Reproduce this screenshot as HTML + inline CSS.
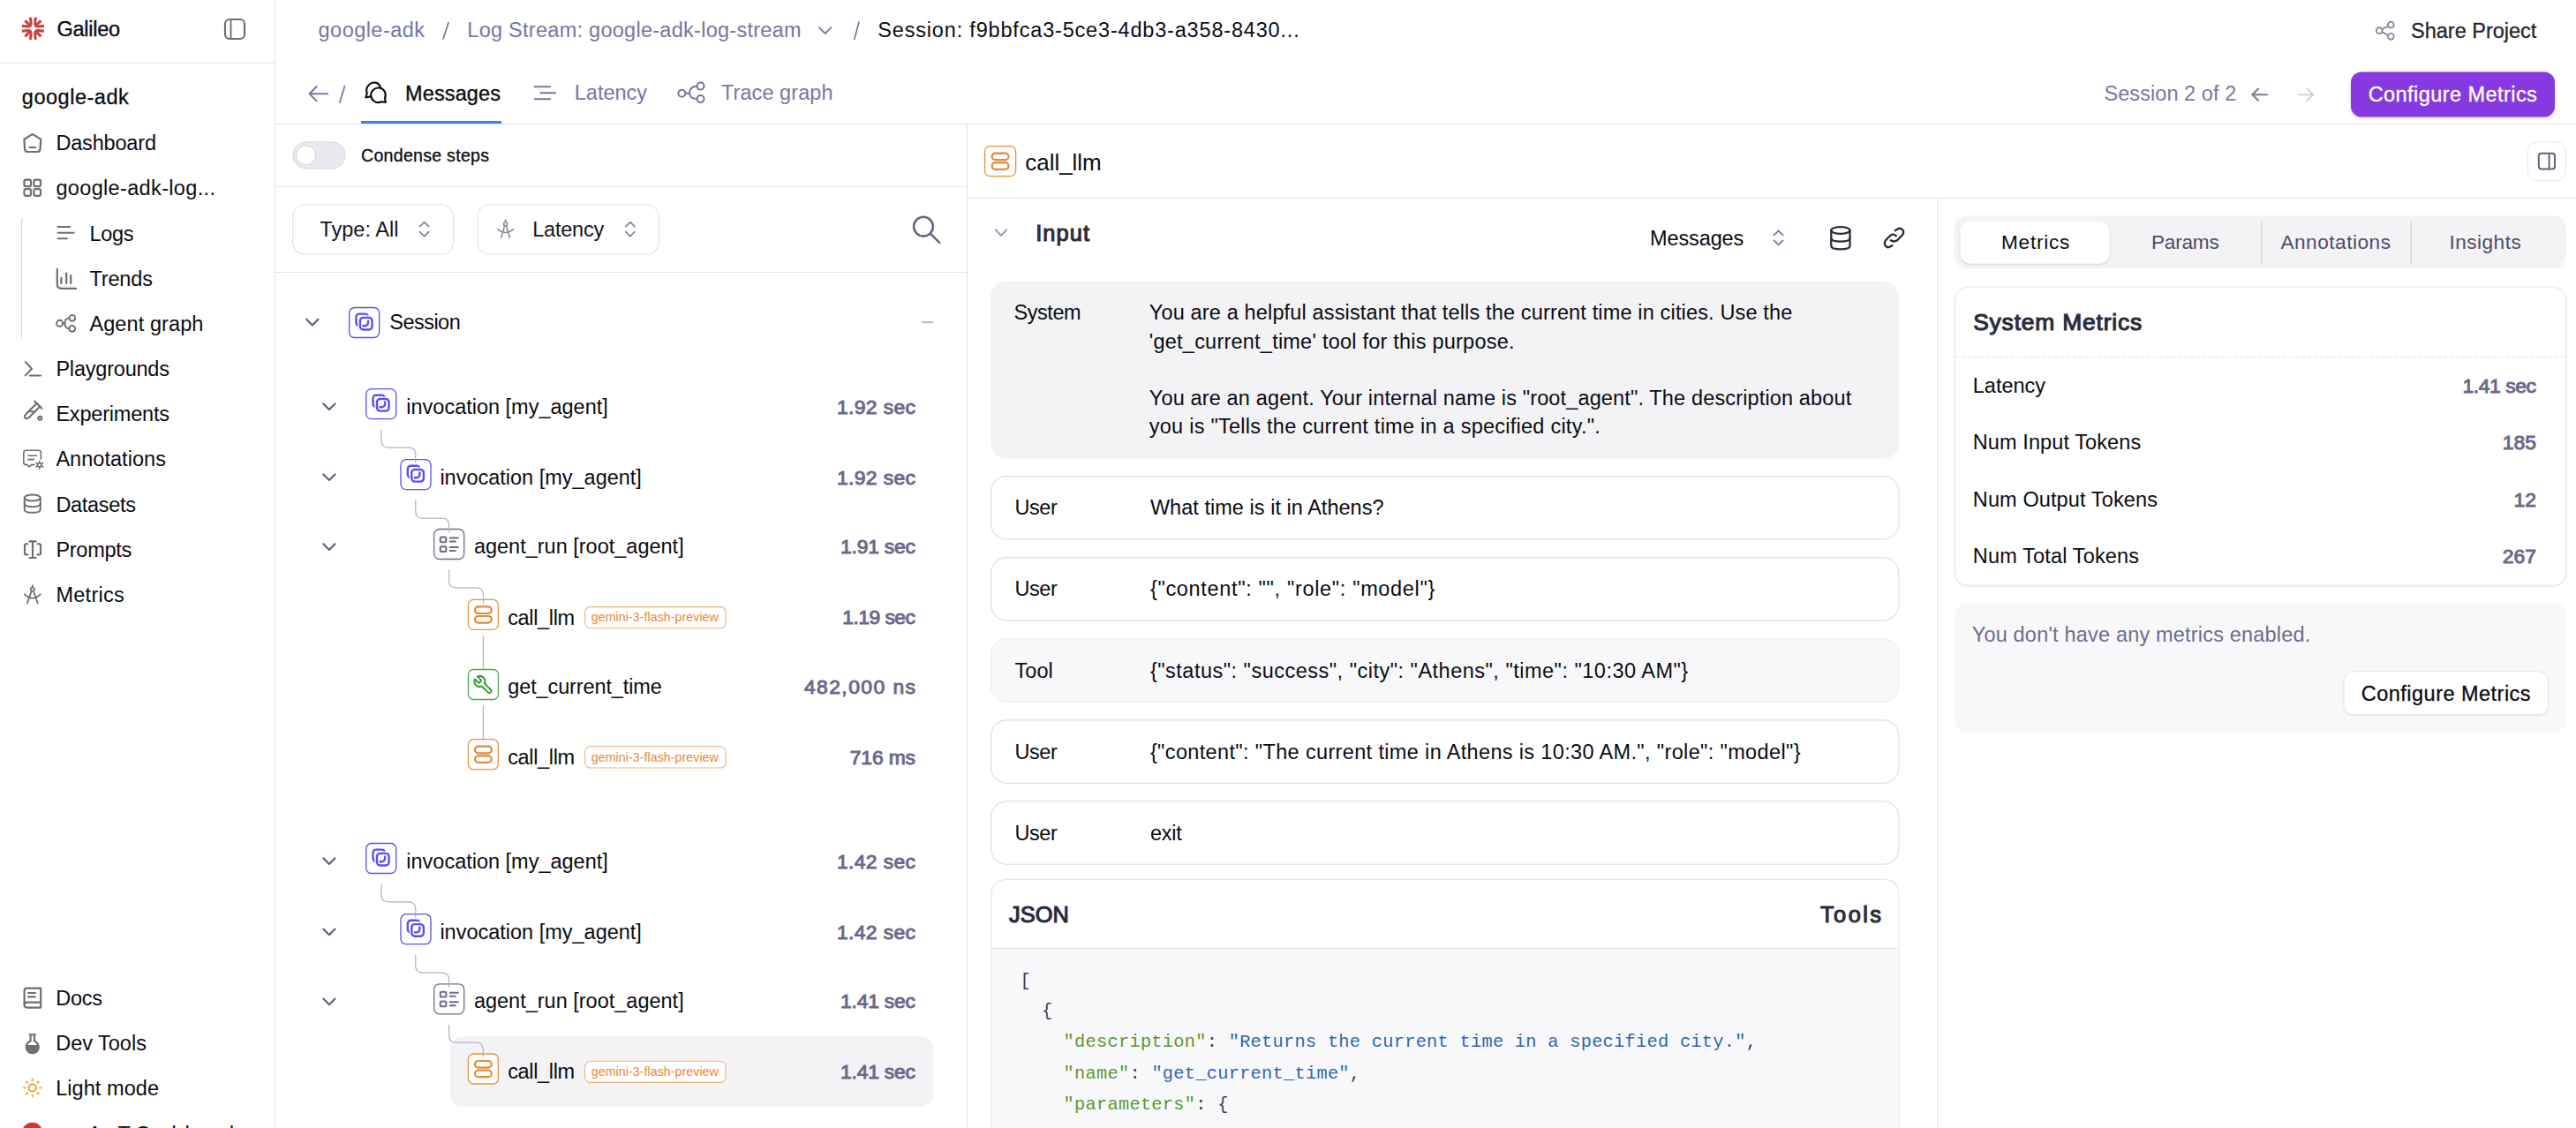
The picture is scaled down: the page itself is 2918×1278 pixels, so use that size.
<!DOCTYPE html>
<html><head><meta charset="utf-8"><style>
html,body{margin:0;padding:0;background:#fff;width:2918px;height:1278px;overflow:hidden;position:relative}
.t{position:absolute;white-space:pre;line-height:1;}
svg{position:absolute;left:0;top:0}
</style></head><body>
<svg width="2918" height="1278" viewBox="0 0 2918 1278"><line x1="311.5" y1="0" x2="311.5" y2="1278" stroke="#e2e2e6" stroke-width="1" /><line x1="0" y1="71.5" x2="311" y2="71.5" stroke="#e2e2e6" stroke-width="1" /><line x1="312" y1="140.5" x2="2918" y2="140.5" stroke="#e2e2e8" stroke-width="1" /><line x1="312" y1="211.5" x2="1095" y2="211.5" stroke="#e4e4ea" stroke-width="1" /><line x1="312" y1="308.5" x2="1095" y2="308.5" stroke="#e4e4ea" stroke-width="1" /><line x1="1095.5" y1="141" x2="1095.5" y2="1278" stroke="#e4e4ea" stroke-width="1" /><line x1="1096" y1="224.5" x2="2918" y2="224.5" stroke="#e4e4ea" stroke-width="1" /><line x1="2194.5" y1="225" x2="2194.5" y2="1278" stroke="#e4e4ea" stroke-width="1" /><g transform="translate(37.4,32.3)" fill="none" stroke="#cd4039" stroke-width="3.1" stroke-linecap="butt" stroke-linejoin="round"><g transform="rotate(0)"><path d="M-2.9 -12.6 L-2.3 -6.6 Q-1.7 -1.7 -6.6 -2.3 L-12.6 -2.9" /><path d="M-9.0 -9.0 L-3.8 -3.8"/></g><g transform="rotate(90)"><path d="M-2.9 -12.6 L-2.3 -6.6 Q-1.7 -1.7 -6.6 -2.3 L-12.6 -2.9" /><path d="M-9.0 -9.0 L-3.8 -3.8"/></g><g transform="rotate(180)"><path d="M-2.9 -12.6 L-2.3 -6.6 Q-1.7 -1.7 -6.6 -2.3 L-12.6 -2.9" /><path d="M-9.0 -9.0 L-3.8 -3.8"/></g><g transform="rotate(270)"><path d="M-2.9 -12.6 L-2.3 -6.6 Q-1.7 -1.7 -6.6 -2.3 L-12.6 -2.9" /><path d="M-9.0 -9.0 L-3.8 -3.8"/></g></g><rect x="255" y="22" width="22" height="22" rx="5" fill="none" stroke="#6f6f73" stroke-width="2.15" /><line x1="261.5" y1="22.5" x2="261.5" y2="43.5" stroke="#6f6f73" stroke-width="1.9" /><line x1="24.5" y1="247" x2="24.5" y2="382.5" stroke="#d4d4d8" stroke-width="1.2" /><g transform="translate(0,0) scale(1)" fill="none" stroke="#6f6f73" stroke-width="2.2" stroke-linecap="round" stroke-linejoin="round"><path d="M36.85 151.8 L46.2 157.9 L45.6 168.6 Q45.3 172 42 172 L31.6 172 Q28.3 172 28 168.6 L27.4 157.9 Z"/><path d="M33.6 167 H40"/></g><g transform="translate(0,0) scale(1)" fill="none" stroke="#6f6f73" stroke-width="2.2" stroke-linecap="round" stroke-linejoin="round"><rect x="27.4" y="203.6" width="7.6" height="7.6" rx="2"/><rect x="38.4" y="203.6" width="7.6" height="7.6" rx="2"/><rect x="27.4" y="214.2" width="7.6" height="7.6" rx="2"/><rect x="38.4" y="214.2" width="7.6" height="7.6" rx="2"/></g><g transform="translate(0,0) scale(1)" fill="none" stroke="#6f6f73" stroke-width="2.1" stroke-linecap="round" stroke-linejoin="round"><path d="M65.6 257 H79"/><path d="M65.6 263.7 H83.6"/><path d="M65.6 270.3 H76"/></g><g transform="translate(0,0) scale(1)" fill="none" stroke="#6f6f73" stroke-width="2.2" stroke-linecap="round" stroke-linejoin="round"><path d="M64.8 304.8 V322 Q64.8 326.8 69.6 326.8 H86.2"/><path d="M69.4 314.8 V321"/><path d="M75.2 309.6 V321"/><path d="M80.2 312 V321"/></g><g transform="translate(0,0) scale(1)" fill="none" stroke="#6f6f73" stroke-width="1.9" stroke-linecap="round" stroke-linejoin="round"><circle cx="67.6" cy="366.3" r="3.5"/><circle cx="81.8" cy="360.3" r="3.4"/><circle cx="81.8" cy="372.3" r="3.4"/><path d="M71.1 366.3 H73.4"/><path d="M78.4 360.4 Q73.4 360.4 73.4 366.3 Q73.4 372.2 78.4 372.2"/></g><g transform="translate(0,0) scale(1)" fill="none" stroke="#6f6f73" stroke-width="2" stroke-linecap="round" stroke-linejoin="round"><path d="M28.8 410 L35.9 417.7 L28.8 425.4"/><path d="M33.6 425.4 H46.1"/></g><g transform="translate(0,0) scale(1)" fill="none" stroke="#6f6f73" stroke-width="2.15" stroke-linecap="round" stroke-linejoin="round"><path d="M39.2 454.6 L47.4 462.8"/><path d="M45.2 460.6 L33.6 472.2 Q30.4 475.4 28.6 473.6 Q26.8 471.8 30 468.6 L41.6 457"/><path d="M33.2 466.2 L39.6 466.2"/><circle cx="45.3" cy="473.8" r="1.9"/></g><g transform="translate(0,0) scale(1)" fill="none" stroke="#6f6f73" stroke-width="1.6" stroke-linecap="round" stroke-linejoin="round"><path d="M46.4 520 V513 Q46.4 510.2 43.6 510.2 H29.6 Q26.8 510.2 26.8 513 V524 Q26.8 526.6 29.6 526.6 H31 L33.2 529 L35.4 526.6 H39"/><path d="M31.8 516.2 H41.6"/><path d="M31.8 520.6 H38.6"/><circle cx="44.8" cy="526.8" r="2.2"/><path d="M44.8 522.6 V524.2 M44.8 529.4 V531 M41 524.6 L42.4 525.6 M47.2 528 L48.6 529 M41 529 L42.4 528 M47.2 525.6 L48.6 524.6"/></g><g transform="translate(0,0) scale(1)" fill="none" stroke="#6f6f73" stroke-width="2" stroke-linecap="round" stroke-linejoin="round"><ellipse cx="36.75" cy="564" rx="9" ry="3.6"/><path d="M27.75 564 V577.2 Q27.75 580.8 36.75 580.8 Q45.75 580.8 45.75 577.2 V564"/><path d="M27.75 570.6 Q27.75 574.2 36.75 574.2 Q45.75 574.2 45.75 570.6"/></g><g transform="translate(0,0) scale(1)" fill="none" stroke="#6f6f73" stroke-width="2.15" stroke-linecap="round" stroke-linejoin="round"><path d="M31.2 616.2 H29.6 Q28 616.2 28 617.8 V626.8 Q28 628.4 29.6 628.4 H31.2"/><path d="M42.6 616.2 H44.4 Q46 616.2 46 617.8 V626.8 Q46 628.4 44.4 628.4 H42.6"/><path d="M33.4 613.4 H40.6 M37 613.4 V632 M33.4 632 H40.6"/></g><g transform="translate(0,0) scale(1)" fill="none" stroke="#6f6f73" stroke-width="1.7" stroke-linecap="round" stroke-linejoin="round"><circle cx="36.8" cy="667.6" r="2.1"/><path d="M36.8 663 V665.4"/><path d="M35.7 669.6 L30.8 683.6"/><path d="M37.9 669.6 L42.8 683.6"/><path d="M27.8 673.4 Q36.8 682 45.8 673.4"/></g><g transform="translate(0,0) scale(1)" fill="none" stroke="#6f6f73" stroke-width="2.15" stroke-linecap="round" stroke-linejoin="round"><path d="M46.2 1119.6 H30.4 Q27.6 1119.6 27.6 1122.4 V1138.6 Q27.6 1141.6 30.4 1141.6 H46.2 V1119.6 Z"/><path d="M27.6 1138.2 Q27.6 1135.6 30.4 1135.6 H46.2"/><path d="M32 1125 H40 M32 1129.4 H39.6"/></g><g transform="translate(0,0) scale(1)" fill="none" stroke="#6f6f73" stroke-width="2.1" stroke-linecap="round" stroke-linejoin="round"><path d="M33.4 1172.2 H40.1"/><path d="M34.6 1172.4 V1179.6 A7 7 0 1 0 38.9 1179.6 V1172.4"/></g><path d="M30.1 1184 H43.4 A7.05 7.05 0 1 1 30.1 1184 Z" fill="#6f6f73"/><g transform="translate(0,0) scale(1)" fill="none" stroke="#dbb236" stroke-width="2.15" stroke-linecap="round" stroke-linejoin="round"><circle cx="36.7" cy="1232.4" r="4.1"/><path d="M45.00 1232.50 L46.30 1232.50"/><path d="M42.57 1238.37 L43.49 1239.29"/><path d="M36.70 1240.80 L36.70 1242.10"/><path d="M30.83 1238.37 L29.91 1239.29"/><path d="M28.40 1232.50 L27.10 1232.50"/><path d="M30.83 1226.63 L29.91 1225.71"/><path d="M36.70 1224.20 L36.70 1222.90"/><path d="M42.57 1226.63 L43.49 1225.71"/></g><circle cx="36.6" cy="1283.6" r="11.8" fill="#d9342b"/><line x1="508.0" y1="25.6" x2="502.2" y2="43.9" stroke="#7776a3" stroke-width="1.7" stroke-linecap="round"/><g transform="translate(0,0) scale(1)" fill="none" stroke="#7776a3" stroke-width="1.85" stroke-linecap="round" stroke-linejoin="round"><path d="M927.9 31.2 L934.7 38.0 L941.5 31.2"/></g><line x1="973.0" y1="25.2" x2="967.8" y2="44.2" stroke="#7776a3" stroke-width="1.7" stroke-linecap="round"/><g transform="translate(0,0) scale(1)" fill="none" stroke="#8b8aa6" stroke-width="1.9" stroke-linecap="round" stroke-linejoin="round"><circle cx="2695.2" cy="34.7" r="3.4"/><circle cx="2708.3" cy="28.2" r="3.4"/><circle cx="2708.3" cy="41.3" r="3.4"/><path d="M2698.3 33.1 L2705.2 29.7 M2698.3 36.3 L2705.2 39.8"/></g><g transform="translate(0,0) scale(1)" fill="none" stroke="#7776a3" stroke-width="2" stroke-linecap="round" stroke-linejoin="round"><path d="M351 106.2 H371"/><path d="M358.6 98 L350.6 106.2 L358.6 114.4"/></g><line x1="390.5" y1="97.6" x2="384.8" y2="115.9" stroke="#7776a3" stroke-width="1.8" stroke-linecap="round"/><g transform="translate(0,0) scale(1)" fill="none" stroke="#0c0c14" stroke-width="2.1" stroke-linecap="round" stroke-linejoin="round"><path d="M432.0 115.3 A8.3 8.3 0 1 1 436.0 111.3 L436.9 115.9 Z"/><path d="M420.2 109.2 L414.4 110.4 L415.8 105.8 Q414.0 101.2 417.0 97.2 Q420.4 93.2 425.4 93.6 Q429.0 94.0 431.0 99.0"/></g><rect x="409" y="137" width="159" height="3" rx="0" fill="#3b80f6" stroke="none" stroke-width="1" /><g transform="translate(0,0) scale(1)" fill="none" stroke="#7776a3" stroke-width="2" stroke-linecap="round" stroke-linejoin="round"><path d="M605.6 98.2 H623.2"/><path d="M612.2 105.2 H629"/><path d="M605.6 112.2 H623.2"/></g><g transform="translate(0,0) scale(1)" fill="none" stroke="#7776a3" stroke-width="2.0" stroke-linecap="round" stroke-linejoin="round"><circle cx="772.4" cy="105.7" r="4"/><circle cx="793.5" cy="97.6" r="4"/><circle cx="793.5" cy="112.1" r="4"/><path d="M776.4 105.7 H781.2"/><path d="M789.5 97.8 Q781.2 97.8 781.2 105.7 Q781.2 112 789.5 112"/></g><g transform="translate(0,0) scale(1)" fill="none" stroke="#7c7b9c" stroke-width="2.15" stroke-linecap="round" stroke-linejoin="round"><path d="M2551.6 107.2 H2568"/><path d="M2558 100.6 L2551.4 107.2 L2558 113.8"/></g><g transform="translate(0,0) scale(1)" fill="none" stroke="#d3d3dc" stroke-width="2.15" stroke-linecap="round" stroke-linejoin="round"><path d="M2603.6 107.2 H2620"/><path d="M2613.6 100.6 L2620.2 107.2 L2613.6 113.8"/></g><rect x="2663" y="81.5" width="231" height="51" rx="12" fill="#8739e1" style="filter:drop-shadow(0 1px 1.5px rgba(60,30,110,0.25))"/><rect x="331.7" y="160.8" width="59.5" height="30.2" rx="15.1" fill="#e9e9ef" stroke="#d8d8e0" stroke-width="1" /><circle cx="346.5" cy="175.9" r="11" fill="#fff" stroke="#d2d2da" stroke-width="1"/><rect x="331.7" y="231.8" width="182" height="56.5" rx="14" fill="#fff" stroke="#e2e2ea" stroke-width="1.1" /><g transform="translate(0,0) scale(1)" fill="none" stroke="#8584a3" stroke-width="1.8" stroke-linecap="round" stroke-linejoin="round"><path d="M475.6 256.6 L480.7 251.6 L485.8 256.6"/><path d="M475.6 262.6 L480.7 267.6 L485.8 262.6"/></g><rect x="540.8" y="231.8" width="205.5" height="56.5" rx="14" fill="#fff" stroke="#e2e2ea" stroke-width="1.1" /><g transform="translate(0,0) scale(1)" fill="none" stroke="#8a89a4" stroke-width="1.6" stroke-linecap="round" stroke-linejoin="round"><circle cx="572.6" cy="253.8" r="2"/><path d="M572.6 249 V251.6"/><path d="M571.6 255.8 L567.8 269.4"/><path d="M573.6 255.8 L577.4 269.4"/><path d="M563.6 259.6 Q572.6 267.4 581.6 259.6"/></g><g transform="translate(0,0) scale(1)" fill="none" stroke="#8584a3" stroke-width="1.8" stroke-linecap="round" stroke-linejoin="round"><path d="M708.8 256.6 L713.9 251.6 L719 256.6"/><path d="M708.8 262.6 L713.9 267.6 L719 262.6"/></g><g transform="translate(0,0) scale(1)" fill="none" stroke="#67658a" stroke-width="2.6" stroke-linecap="round" stroke-linejoin="round"><circle cx="1046" cy="256.7" r="10.9"/><path d="M1054.4 265.1 L1064.2 274.9"/></g><rect x="510" y="1174" width="547" height="80" rx="14" fill="#f3f3f6" stroke="none" stroke-width="1" /><g transform="translate(0,0) scale(1)" fill="none" stroke="#5f5d7c" stroke-width="2.1" stroke-linecap="round" stroke-linejoin="round"><path d="M347.2 361.7 L353.8 368.4 L360.40000000000003 361.7"/></g><rect x="395.6" y="348.5" width="34" height="34" rx="6" fill="#fff" stroke="#5b4ff0" stroke-width="1.3" /><g transform="translate(0,0) scale(1)" fill="none" stroke="#5b4ff0" stroke-width="2.4" stroke-linecap="round" stroke-linejoin="round"><rect x="403.40000000000003" y="355.6" width="13.6" height="13.6" rx="3.6"/></g><rect x="407.90000000000003" y="359.90000000000003" width="13.6" height="13.6" rx="3.6" fill="none" stroke="#fff" stroke-width="5"/><g transform="translate(0,0) scale(1)" fill="none" stroke="#5b4ff0" stroke-width="2.4" stroke-linecap="round" stroke-linejoin="round"><rect x="407.90000000000003" y="359.90000000000003" width="13.6" height="13.6" rx="3.6"/></g><line x1="1044" y1="365.2" x2="1057" y2="365.2" stroke="#b3b2c8" stroke-width="1.9" /><g transform="translate(0,0) scale(1)" fill="none" stroke="#5f5d7c" stroke-width="2.1" stroke-linecap="round" stroke-linejoin="round"><path d="M366.29999999999995 457.4 L372.9 464.09999999999997 L379.5 457.4"/></g><rect x="414.7" y="440.59999999999997" width="34" height="34" rx="6" fill="#fff" stroke="#5b4ff0" stroke-width="1.3" /><g transform="translate(0,0) scale(1)" fill="none" stroke="#5b4ff0" stroke-width="2.4" stroke-linecap="round" stroke-linejoin="round"><rect x="422.5" y="447.7" width="13.6" height="13.6" rx="3.6"/></g><rect x="427.0" y="452.0" width="13.6" height="13.6" rx="3.6" fill="none" stroke="#fff" stroke-width="5"/><g transform="translate(0,0) scale(1)" fill="none" stroke="#5b4ff0" stroke-width="2.4" stroke-linecap="round" stroke-linejoin="round"><rect x="427.0" y="452.0" width="13.6" height="13.6" rx="3.6"/></g><g transform="translate(0,0) scale(1)" fill="none" stroke="#5f5d7c" stroke-width="2.1" stroke-linecap="round" stroke-linejoin="round"><path d="M366.29999999999995 537.4 L372.9 544.1 L379.5 537.4"/></g><rect x="454.0" y="520.6" width="34" height="34" rx="6" fill="#fff" stroke="#5b4ff0" stroke-width="1.3" /><g transform="translate(0,0) scale(1)" fill="none" stroke="#5b4ff0" stroke-width="2.4" stroke-linecap="round" stroke-linejoin="round"><rect x="461.8" y="527.7" width="13.6" height="13.6" rx="3.6"/></g><rect x="466.3" y="532.0" width="13.6" height="13.6" rx="3.6" fill="none" stroke="#fff" stroke-width="5"/><g transform="translate(0,0) scale(1)" fill="none" stroke="#5b4ff0" stroke-width="2.4" stroke-linecap="round" stroke-linejoin="round"><rect x="466.3" y="532.0" width="13.6" height="13.6" rx="3.6"/></g><g transform="translate(0,0) scale(1)" fill="none" stroke="#5f5d7c" stroke-width="2.1" stroke-linecap="round" stroke-linejoin="round"><path d="M366.29999999999995 616.3 L372.9 623.0 L379.5 616.3"/></g><rect x="491.7" y="599.5" width="34" height="34" rx="6" fill="#fff" stroke="#6e6c8c" stroke-width="1.3" /><g transform="translate(0,0) scale(1)" fill="none" stroke="#6b6989" stroke-width="2" stroke-linecap="round" stroke-linejoin="round"><rect x="498.8" y="608.4" width="6.6" height="5.8" rx="1.6"/><rect x="498.8" y="619.2" width="6.6" height="5.8" rx="1.6"/><path d="M509.8 609.4 H518.8 M509.8 613.4 H515.8 M509.8 620.0 H518.8 M509.8 624.0 H515.8"/></g><rect x="530.4" y="679.4" width="34" height="34" rx="6" fill="#fff" stroke="#e6923f" stroke-width="1.3" /><g transform="translate(0,0) scale(1)" fill="none" stroke="#e08b38" stroke-width="2.2" stroke-linecap="round" stroke-linejoin="round"><rect x="538.0" y="687.4" width="18.8" height="7.6" rx="3.8"/><rect x="538.0" y="698.0" width="18.8" height="7.6" rx="3.8"/></g><rect x="662.7" y="687.6" width="159.4" height="24.2" rx="6" fill="#fff" stroke="#f2b27a" stroke-width="1.1" /><line x1="547.4" y1="720" x2="547.4" y2="758" stroke="#b3b2c6" stroke-width="1.3" /><rect x="530.5" y="758.5" width="34" height="34" rx="6" fill="#fff" stroke="#4caa48" stroke-width="1.3" /><g transform="translate(535.4,764.0) scale(1.0)" fill="none" stroke="#3e9d3a" stroke-width="2.1" stroke-linecap="round" stroke-linejoin="round"><path transform="translate(24,0) scale(-1,1)" d="M14.7 6.3a1 1 0 0 0 0 1.4l1.6 1.6a1 1 0 0 0 1.4 0l3.77-3.77a6 6 0 0 1-7.94 7.94l-6.91 6.91a2.12 2.12 0 0 1-3-3l6.91-6.91a6 6 0 0 1 7.94-7.94l-3.76 3.76z"/></g><line x1="547.4" y1="799" x2="547.4" y2="837" stroke="#b3b2c6" stroke-width="1.3" /><rect x="530.4" y="837.7" width="34" height="34" rx="6" fill="#fff" stroke="#e6923f" stroke-width="1.3" /><g transform="translate(0,0) scale(1)" fill="none" stroke="#e08b38" stroke-width="2.2" stroke-linecap="round" stroke-linejoin="round"><rect x="538.0" y="845.7" width="18.8" height="7.6" rx="3.8"/><rect x="538.0" y="856.3000000000001" width="18.8" height="7.6" rx="3.8"/></g><rect x="662.7" y="845.8" width="159.4" height="24.2" rx="6" fill="#fff" stroke="#f2b27a" stroke-width="1.1" /><g transform="translate(0,0) scale(1)" fill="none" stroke="#5f5d7c" stroke-width="2.1" stroke-linecap="round" stroke-linejoin="round"><path d="M366.29999999999995 972.3 L372.9 979.0 L379.5 972.3"/></g><rect x="414.7" y="955.5" width="34" height="34" rx="6" fill="#fff" stroke="#5b4ff0" stroke-width="1.3" /><g transform="translate(0,0) scale(1)" fill="none" stroke="#5b4ff0" stroke-width="2.4" stroke-linecap="round" stroke-linejoin="round"><rect x="422.5" y="962.6" width="13.6" height="13.6" rx="3.6"/></g><rect x="427.0" y="966.9" width="13.6" height="13.6" rx="3.6" fill="none" stroke="#fff" stroke-width="5"/><g transform="translate(0,0) scale(1)" fill="none" stroke="#5b4ff0" stroke-width="2.4" stroke-linecap="round" stroke-linejoin="round"><rect x="427.0" y="966.9" width="13.6" height="13.6" rx="3.6"/></g><g transform="translate(0,0) scale(1)" fill="none" stroke="#5f5d7c" stroke-width="2.1" stroke-linecap="round" stroke-linejoin="round"><path d="M366.29999999999995 1052.5 L372.9 1059.2 L379.5 1052.5"/></g><rect x="454.0" y="1035.7" width="34" height="34" rx="6" fill="#fff" stroke="#5b4ff0" stroke-width="1.3" /><g transform="translate(0,0) scale(1)" fill="none" stroke="#5b4ff0" stroke-width="2.4" stroke-linecap="round" stroke-linejoin="round"><rect x="461.8" y="1042.8" width="13.6" height="13.6" rx="3.6"/></g><rect x="466.3" y="1047.1" width="13.6" height="13.6" rx="3.6" fill="none" stroke="#fff" stroke-width="5"/><g transform="translate(0,0) scale(1)" fill="none" stroke="#5b4ff0" stroke-width="2.4" stroke-linecap="round" stroke-linejoin="round"><rect x="466.3" y="1047.1" width="13.6" height="13.6" rx="3.6"/></g><g transform="translate(0,0) scale(1)" fill="none" stroke="#5f5d7c" stroke-width="2.1" stroke-linecap="round" stroke-linejoin="round"><path d="M366.29999999999995 1131.6 L372.9 1138.3 L379.5 1131.6"/></g><rect x="491.7" y="1114.8" width="34" height="34" rx="6" fill="#fff" stroke="#6e6c8c" stroke-width="1.3" /><g transform="translate(0,0) scale(1)" fill="none" stroke="#6b6989" stroke-width="2" stroke-linecap="round" stroke-linejoin="round"><rect x="498.8" y="1123.7" width="6.6" height="5.8" rx="1.6"/><rect x="498.8" y="1134.5" width="6.6" height="5.8" rx="1.6"/><path d="M509.8 1124.7 H518.8 M509.8 1128.7 H515.8 M509.8 1135.3 H518.8 M509.8 1139.3 H515.8"/></g><rect x="530.4" y="1194.0" width="34" height="34" rx="6" fill="#fff" stroke="#e6923f" stroke-width="1.3" /><g transform="translate(0,0) scale(1)" fill="none" stroke="#e08b38" stroke-width="2.2" stroke-linecap="round" stroke-linejoin="round"><rect x="538.0" y="1202.0" width="18.8" height="7.6" rx="3.8"/><rect x="538.0" y="1212.6" width="18.8" height="7.6" rx="3.8"/></g><rect x="662.7" y="1202.2" width="159.4" height="24.2" rx="6" fill="#fff" stroke="#f2b27a" stroke-width="1.1" /><path d="M432 486.7 V499.0 Q432 507.0 440 507.0 H462.75 Q470.75 507.0 470.75 515.0 V524.6" fill="none" stroke="#b3b2c6" stroke-width="1.25"/><path d="M470.75 566.6999999999999 V578.9999999999999 Q470.75 586.9999999999999 478.75 586.9999999999999 H500.6 Q508.6 586.9999999999999 508.6 594.9999999999999 V603.5" fill="none" stroke="#b3b2c6" stroke-width="1.25"/><path d="M508.6 645.5999999999999 V657.8999999999999 Q508.6 665.8999999999999 516.6 665.8999999999999 H539.4 Q547.4 665.8999999999999 547.4 673.8999999999999 V683.4" fill="none" stroke="#b3b2c6" stroke-width="1.25"/><path d="M432 1001.5999999999999 V1013.8999999999999 Q432 1021.8999999999999 440 1021.8999999999999 H462.75 Q470.75 1021.8999999999999 470.75 1029.8999999999999 V1039.7" fill="none" stroke="#b3b2c6" stroke-width="1.25"/><path d="M470.75 1081.8 V1094.1 Q470.75 1102.1 478.75 1102.1 H500.6 Q508.6 1102.1 508.6 1110.1 V1118.8" fill="none" stroke="#b3b2c6" stroke-width="1.25"/><path d="M508.6 1160.8999999999999 V1173.1999999999998 Q508.6 1181.1999999999998 516.6 1181.1999999999998 H539.4 Q547.4 1181.1999999999998 547.4 1189.1999999999998 V1198.0" fill="none" stroke="#b3b2c6" stroke-width="1.25"/><rect x="1115.6" y="165.6" width="35" height="34" rx="6" fill="#fff" stroke="#e6923f" stroke-width="1.3" /><g transform="translate(0,0) scale(1)" fill="none" stroke="#e08b38" stroke-width="2.2" stroke-linecap="round" stroke-linejoin="round"><rect x="1123.6999999999998" y="173.6" width="18.8" height="7.6" rx="3.8"/><rect x="1123.6999999999998" y="184.2" width="18.8" height="7.6" rx="3.8"/></g><rect x="2863.2" y="160.9" width="43.6" height="43.6" rx="11" fill="#fff" stroke="#e6e6ee" stroke-width="1" /><g transform="translate(0,0) scale(1)" fill="none" stroke="#64627f" stroke-width="2" stroke-linecap="round" stroke-linejoin="round"><rect x="2875.8" y="173.8" width="18.2" height="17.6" rx="3"/><path d="M2887.6 174 V191.2"/></g><g transform="translate(0,0) scale(1)" fill="none" stroke="#8f8eab" stroke-width="1.8" stroke-linecap="round" stroke-linejoin="round"><path d="M1127.8 260.4 L1134 266.8 L1140.2 260.4"/></g><g transform="translate(0,0) scale(1)" fill="none" stroke="#7776a0" stroke-width="1.8" stroke-linecap="round" stroke-linejoin="round"><path d="M2009.6 266.4 L2014.6 261.4 L2019.6 266.4"/><path d="M2009.6 272.4 L2014.6 277.4 L2019.6 272.4"/></g><g transform="translate(0,0) scale(1)" fill="none" stroke="#2c2b3d" stroke-width="2.3" stroke-linecap="round" stroke-linejoin="round"><ellipse cx="2084.9" cy="261" rx="10.6" ry="3.9"/><path d="M2074.3 261 V278.6 Q2074.3 282.4 2084.9 282.4 Q2095.5 282.4 2095.5 278.6 V261"/><path d="M2074.3 269.8 Q2074.3 273.6 2084.9 273.6 Q2095.5 273.6 2095.5 269.8"/></g><g transform="translate(0,0) scale(1)" fill="none" stroke="#2c2b3d" stroke-width="2.3" stroke-linecap="round" stroke-linejoin="round"><path d="M2146.7 261.2 L2149.6 259.4 Q2153.4 257.6 2155.6 260.8 Q2157.2 263.8 2154.6 266.6 L2149.4 272 Q2145.6 275 2141.8 272.2"/><path d="M2147.9 267.4 Q2144.8 264.2 2141.6 266.6 L2136.4 271.8 Q2133.8 275 2135.4 278 Q2137.8 281.4 2141 279.6 L2143.4 278.2"/></g><rect x="1122" y="318.7" width="1029.5" height="201" rx="18" fill="#f3f3f6" stroke="none" stroke-width="1" /><rect x="1122.5" y="539.5" width="1028.5" height="71.5" rx="18" fill="#fff" stroke="#dcdce5" stroke-width="1.1" /><rect x="1122.5" y="631.6" width="1028.5" height="71.5" rx="18" fill="#fff" stroke="#dcdce5" stroke-width="1.1" /><rect x="1122.5" y="723.9" width="1028.5" height="71.5" rx="18" fill="#f8f8fa" stroke="#ececf1" stroke-width="1" /><rect x="1122.5" y="815.9" width="1028.5" height="71.5" rx="18" fill="#fff" stroke="#dcdce5" stroke-width="1.1" /><rect x="1122.5" y="907.8" width="1028.5" height="71.5" rx="18" fill="#fff" stroke="#dcdce5" stroke-width="1.1" /><path d="M1123 1278 V1014.4 Q1123 996.4 1141 996.4 H2133 Q2151 996.4 2151 1014.4 V1278" fill="#fff" stroke="#e6e6ec" stroke-width="1.1"/><rect x="1123.6" y="1075" width="1026.8" height="210" rx="0" fill="#f8f8fb" stroke="none" stroke-width="1" /><line x1="1123.5" y1="1074.5" x2="2150.5" y2="1074.5" stroke="#dedee6" stroke-width="1.2" /><rect x="2214" y="244.2" width="692.8" height="60.1" rx="14" fill="#f3f3f6" stroke="none" stroke-width="1" /><rect x="2220.5" y="250.4" width="169.3" height="48.4" rx="12" fill="#fff" style="filter:drop-shadow(0 1px 1.2px rgba(30,30,60,0.18))"/><line x1="2561.6" y1="251" x2="2561.6" y2="298.4" stroke="#cfcfda" stroke-width="1.2" /><line x1="2731.1" y1="251" x2="2731.1" y2="298.4" stroke="#cfcfda" stroke-width="1.2" /><rect x="2214.5" y="325.4" width="692" height="337.8" rx="14" fill="#fff" stroke="#e7e7ee" stroke-width="1" style="filter:drop-shadow(0 1.5px 1px rgba(30,30,60,0.10))"/><line x1="2215" y1="404.5" x2="2906" y2="404.5" stroke="#e2e2ea" stroke-width="1" stroke-dasharray="4 3"/><rect x="2214" y="683.2" width="692.8" height="146.7" rx="14" fill="#f8f8fa" stroke="none" stroke-width="1" /><rect x="2655" y="760.8" width="231.3" height="48.8" rx="11" fill="#fff" stroke="#e4e4ec" stroke-width="1" style="filter:drop-shadow(0 1px 1px rgba(30,30,60,0.08))"/></svg>
<div class="t" id="t0" style="top:22.13px;font-family:'Liberation Sans', sans-serif;font-size:23.5px;color:#0c0c14;font-weight:400;letter-spacing:-0.276px;-webkit-text-stroke:0.35px #0c0c14;left:64.50px;">Galileo</div>
<div class="t" id="t1" style="top:99.43px;font-family:'Liberation Sans', sans-serif;font-size:23.5px;color:#0c0c14;font-weight:400;letter-spacing:0.523px;-webkit-text-stroke:0.3px #0c0c14;left:24.80px;">google-adk</div>
<div class="t" id="t2" style="top:151.03px;font-family:'Liberation Sans', sans-serif;font-size:23.5px;color:#0c0c14;font-weight:400;letter-spacing:-0.171px;left:63.40px;">Dashboard</div>
<div class="t" id="t3" style="top:201.62px;font-family:'Liberation Sans', sans-serif;font-size:23.5px;color:#0c0c14;font-weight:400;letter-spacing:0.346px;left:63.40px;">google-adk-log...</div>
<div class="t" id="t4" style="top:254.03px;font-family:'Liberation Sans', sans-serif;font-size:23.5px;color:#0c0c14;font-weight:400;letter-spacing:-0.323px;left:101.40px;">Logs</div>
<div class="t" id="t5" style="top:304.72px;font-family:'Liberation Sans', sans-serif;font-size:23.5px;color:#0c0c14;font-weight:400;letter-spacing:-0.156px;left:101.40px;">Trends</div>
<div class="t" id="t6" style="top:356.02px;font-family:'Liberation Sans', sans-serif;font-size:23.5px;color:#0c0c14;font-weight:400;letter-spacing:0.095px;left:101.40px;">Agent graph</div>
<div class="t" id="t7" style="top:407.32px;font-family:'Liberation Sans', sans-serif;font-size:23.5px;color:#0c0c14;font-weight:400;letter-spacing:-0.204px;left:63.40px;">Playgrounds</div>
<div class="t" id="t8" style="top:458.42px;font-family:'Liberation Sans', sans-serif;font-size:23.5px;color:#0c0c14;font-weight:400;letter-spacing:-0.201px;left:63.40px;">Experiments</div>
<div class="t" id="t9" style="top:508.52px;font-family:'Liberation Sans', sans-serif;font-size:23.5px;color:#0c0c14;font-weight:400;letter-spacing:0.037px;left:63.40px;">Annotations</div>
<div class="t" id="t10" style="top:560.73px;font-family:'Liberation Sans', sans-serif;font-size:23.5px;color:#0c0c14;font-weight:400;letter-spacing:-0.307px;left:63.40px;">Datasets</div>
<div class="t" id="t11" style="top:612.02px;font-family:'Liberation Sans', sans-serif;font-size:23.5px;color:#0c0c14;font-weight:400;letter-spacing:-0.267px;left:63.40px;">Prompts</div>
<div class="t" id="t12" style="top:663.02px;font-family:'Liberation Sans', sans-serif;font-size:23.5px;color:#0c0c14;font-weight:400;letter-spacing:0.278px;left:63.40px;">Metrics</div>
<div class="t" id="t13" style="top:1119.83px;font-family:'Liberation Sans', sans-serif;font-size:23.5px;color:#0c0c14;font-weight:400;letter-spacing:-0.282px;left:63.20px;">Docs</div>
<div class="t" id="t14" style="top:1170.73px;font-family:'Liberation Sans', sans-serif;font-size:23.5px;color:#0c0c14;font-weight:400;letter-spacing:-0.008px;left:63.20px;">Dev Tools</div>
<div class="t" id="t15" style="top:1222.43px;font-family:'Liberation Sans', sans-serif;font-size:23.5px;color:#0c0c14;font-weight:400;letter-spacing:0.058px;left:63.20px;">Light mode</div>
<div class="t" id="t16" style="top:1273.83px;font-family:'Liberation Sans', sans-serif;font-size:23.5px;color:#0c0c14;font-weight:400;left:99.50px;">A</div>
<div class="t" id="t17" style="top:1273.83px;font-family:'Liberation Sans', sans-serif;font-size:23.5px;color:#0c0c14;font-weight:400;left:133.50px;">T</div>
<div class="t" id="t18" style="top:1273.83px;font-family:'Liberation Sans', sans-serif;font-size:23.5px;color:#0c0c14;font-weight:400;left:153.00px;">O</div>
<div class="t" id="t19" style="top:1273.83px;font-family:'Liberation Sans', sans-serif;font-size:23.5px;color:#0c0c14;font-weight:400;left:194.50px;">l</div>
<div class="t" id="t20" style="top:1273.83px;font-family:'Liberation Sans', sans-serif;font-size:23.5px;color:#0c0c14;font-weight:400;left:209.50px;">l</div>
<div class="t" id="t21" style="top:1273.83px;font-family:'Liberation Sans', sans-serif;font-size:23.5px;color:#0c0c14;font-weight:400;left:252.00px;">d</div>
<div class="t" id="t22" style="top:23.03px;font-family:'Liberation Sans', sans-serif;font-size:23.5px;color:#7776a3;font-weight:400;letter-spacing:0.456px;left:360.60px;">google-adk</div>
<div class="t" id="t23" style="top:23.03px;font-family:'Liberation Sans', sans-serif;font-size:23.5px;color:#7776a3;font-weight:400;letter-spacing:0.270px;left:529.30px;">Log Stream: google-adk-log-stream</div>
<div class="t" id="t24" style="top:23.03px;font-family:'Liberation Sans', sans-serif;font-size:23.5px;color:#0c0c14;font-weight:400;letter-spacing:0.818px;left:994.30px;">Session: f9bbfca3-5ce3-4db3-a358-8430...</div>
<div class="t" id="t25" style="top:23.73px;font-family:'Liberation Sans', sans-serif;font-size:23.5px;color:#25252f;font-weight:400;letter-spacing:0.001px;-webkit-text-stroke:0.3px #25252f;left:2731.00px;">Share Project</div>
<div class="t" id="t26" style="top:94.53px;font-family:'Liberation Sans', sans-serif;font-size:23.5px;color:#0c0c14;font-weight:400;letter-spacing:0.127px;-webkit-text-stroke:0.35px #0c0c14;left:459.00px;">Messages</div>
<div class="t" id="t27" style="top:94.03px;font-family:'Liberation Sans', sans-serif;font-size:23.5px;color:#7776a3;font-weight:400;letter-spacing:-0.019px;left:650.80px;">Latency</div>
<div class="t" id="t28" style="top:94.03px;font-family:'Liberation Sans', sans-serif;font-size:23.5px;color:#7776a3;font-weight:400;letter-spacing:0.066px;left:817.00px;">Trace graph</div>
<div class="t" id="t29" style="top:95.03px;font-family:'Liberation Sans', sans-serif;font-size:23.5px;color:#7776a3;font-weight:400;letter-spacing:0.059px;left:2383.50px;">Session 2 of 2</div>
<div class="t" id="t30" style="top:95.73px;font-family:'Liberation Sans', sans-serif;font-size:23.5px;color:#ffffff;font-weight:400;letter-spacing:0.440px;-webkit-text-stroke:0.3px #ffffff;left:2682.70px;">Configure Metrics</div>
<div class="t" id="t31" style="top:167.14px;font-family:'Liberation Sans', sans-serif;font-size:19.6px;color:#0c0c14;font-weight:400;letter-spacing:0.261px;-webkit-text-stroke:0.3px #0c0c14;left:409.00px;">Condense steps</div>
<div class="t" id="t32" style="top:248.72px;font-family:'Liberation Sans', sans-serif;font-size:23.5px;color:#16161e;font-weight:400;letter-spacing:0.046px;left:362.30px;">Type: All</div>
<div class="t" id="t33" style="top:248.53px;font-family:'Liberation Sans', sans-serif;font-size:23.5px;color:#16161e;font-weight:400;letter-spacing:-0.202px;left:603.20px;">Latency</div>
<div class="t" id="t34" style="top:354.02px;font-family:'Liberation Sans', sans-serif;font-size:23.5px;color:#0c0c14;font-weight:400;letter-spacing:-0.518px;left:441.25px;">Session</div>
<div class="t" id="t35" style="top:449.82px;font-family:'Liberation Sans', sans-serif;font-size:23.5px;color:#0c0c14;font-weight:400;letter-spacing:-0.005px;left:460.30px;">invocation [my_agent]</div>
<div class="t" id="t36" style="top:449.94px;font-family:'Liberation Sans', sans-serif;font-size:22.9px;color:#6b6889;font-weight:400;letter-spacing:0.365px;-webkit-text-stroke:0.96px #6b6889;right:1880.64px;">1.92 sec</div>
<div class="t" id="t37" style="top:529.82px;font-family:'Liberation Sans', sans-serif;font-size:23.5px;color:#0c0c14;font-weight:400;letter-spacing:-0.005px;left:498.40px;">invocation [my_agent]</div>
<div class="t" id="t38" style="top:529.73px;font-family:'Liberation Sans', sans-serif;font-size:22.9px;color:#6b6889;font-weight:400;letter-spacing:0.365px;-webkit-text-stroke:0.96px #6b6889;right:1880.64px;">1.92 sec</div>
<div class="t" id="t39" style="top:607.92px;font-family:'Liberation Sans', sans-serif;font-size:23.5px;color:#0c0c14;font-weight:400;letter-spacing:-0.001px;left:536.90px;">agent_run [root_agent]</div>
<div class="t" id="t40" style="top:608.03px;font-family:'Liberation Sans', sans-serif;font-size:22.9px;color:#6b6889;font-weight:400;letter-spacing:-0.221px;-webkit-text-stroke:0.96px #6b6889;right:1881.22px;">1.91 sec</div>
<div class="t" id="t41" style="top:688.52px;font-family:'Liberation Sans', sans-serif;font-size:23.5px;color:#0c0c14;font-weight:400;letter-spacing:-0.337px;left:575.20px;">call_llm</div>
<div class="t" id="t42" style="top:692.33px;font-family:'Liberation Sans', sans-serif;font-size:14.2px;color:#e8873a;font-weight:400;letter-spacing:0.061px;left:669.80px;">gemini-3-flash-preview</div>
<div class="t" id="t43" style="top:688.43px;font-family:'Liberation Sans', sans-serif;font-size:22.9px;color:#6b6889;font-weight:400;letter-spacing:-0.535px;-webkit-text-stroke:0.96px #6b6889;right:1881.54px;">1.19 sec</div>
<div class="t" id="t44" style="top:767.23px;font-family:'Liberation Sans', sans-serif;font-size:23.5px;color:#0c0c14;font-weight:400;letter-spacing:-0.123px;left:575.30px;">get_current_time</div>
<div class="t" id="t45" style="top:767.33px;font-family:'Liberation Sans', sans-serif;font-size:22.9px;color:#6b6889;font-weight:400;letter-spacing:1.424px;-webkit-text-stroke:0.96px #6b6889;right:1879.58px;">482,000 ns</div>
<div class="t" id="t46" style="top:847.02px;font-family:'Liberation Sans', sans-serif;font-size:23.5px;color:#0c0c14;font-weight:400;letter-spacing:-0.337px;left:575.20px;">call_llm</div>
<div class="t" id="t47" style="top:850.53px;font-family:'Liberation Sans', sans-serif;font-size:14.2px;color:#e8873a;font-weight:400;letter-spacing:0.061px;left:669.80px;">gemini-3-flash-preview</div>
<div class="t" id="t48" style="top:846.93px;font-family:'Liberation Sans', sans-serif;font-size:22.9px;color:#6b6889;font-weight:400;letter-spacing:-0.176px;-webkit-text-stroke:0.96px #6b6889;right:1881.18px;">716 ms</div>
<div class="t" id="t49" style="top:964.72px;font-family:'Liberation Sans', sans-serif;font-size:23.5px;color:#0c0c14;font-weight:400;letter-spacing:-0.005px;left:460.30px;">invocation [my_agent]</div>
<div class="t" id="t50" style="top:964.83px;font-family:'Liberation Sans', sans-serif;font-size:22.9px;color:#6b6889;font-weight:400;letter-spacing:0.365px;-webkit-text-stroke:0.96px #6b6889;right:1880.64px;">1.42 sec</div>
<div class="t" id="t51" style="top:1044.93px;font-family:'Liberation Sans', sans-serif;font-size:23.5px;color:#0c0c14;font-weight:400;letter-spacing:-0.005px;left:498.40px;">invocation [my_agent]</div>
<div class="t" id="t52" style="top:1044.84px;font-family:'Liberation Sans', sans-serif;font-size:22.9px;color:#6b6889;font-weight:400;letter-spacing:0.365px;-webkit-text-stroke:0.96px #6b6889;right:1880.64px;">1.42 sec</div>
<div class="t" id="t53" style="top:1123.22px;font-family:'Liberation Sans', sans-serif;font-size:23.5px;color:#0c0c14;font-weight:400;letter-spacing:-0.001px;left:536.90px;">agent_run [root_agent]</div>
<div class="t" id="t54" style="top:1123.34px;font-family:'Liberation Sans', sans-serif;font-size:22.9px;color:#6b6889;font-weight:400;letter-spacing:-0.221px;-webkit-text-stroke:0.96px #6b6889;right:1881.22px;">1.41 sec</div>
<div class="t" id="t55" style="top:1203.12px;font-family:'Liberation Sans', sans-serif;font-size:23.5px;color:#0c0c14;font-weight:400;letter-spacing:-0.337px;left:575.20px;">call_llm</div>
<div class="t" id="t56" style="top:1206.93px;font-family:'Liberation Sans', sans-serif;font-size:14.2px;color:#e8873a;font-weight:400;letter-spacing:0.061px;left:669.80px;">gemini-3-flash-preview</div>
<div class="t" id="t57" style="top:1203.04px;font-family:'Liberation Sans', sans-serif;font-size:22.9px;color:#6b6889;font-weight:400;letter-spacing:-0.221px;-webkit-text-stroke:0.96px #6b6889;right:1881.22px;">1.41 sec</div>
<div class="t" id="t58" style="top:171.10px;font-family:'Liberation Sans', sans-serif;font-size:26px;color:#0c0c14;font-weight:400;letter-spacing:-0.041px;left:1161.30px;">call_llm</div>
<div class="t" id="t59" style="top:251.61px;font-family:'Liberation Sans', sans-serif;font-size:25.4px;color:#2b2a3c;font-weight:400;letter-spacing:1.104px;-webkit-text-stroke:1.07px #2b2a3c;left:1173.20px;">Input</div>
<div class="t" id="t60" style="top:259.22px;font-family:'Liberation Sans', sans-serif;font-size:23.5px;color:#0c0c14;font-weight:400;letter-spacing:-0.116px;left:1869.00px;">Messages</div>
<div class="t" id="t61" style="top:343.12px;font-family:'Liberation Sans', sans-serif;font-size:23.5px;color:#0c0c14;font-weight:400;letter-spacing:-0.472px;left:1148.60px;">System</div>
<div class="t" id="t62" style="top:343.12px;font-family:'Liberation Sans', sans-serif;font-size:23.5px;color:#0c0c14;font-weight:400;letter-spacing:0.150px;left:1301.80px;">You are a helpful assistant that tells the current time in cities. Use the</div>
<div class="t" id="t63" style="top:375.62px;font-family:'Liberation Sans', sans-serif;font-size:23.5px;color:#0c0c14;font-weight:400;letter-spacing:0.223px;left:1301.80px;">'get_current_time' tool for this purpose.</div>
<div class="t" id="t64" style="top:440.32px;font-family:'Liberation Sans', sans-serif;font-size:23.5px;color:#0c0c14;font-weight:400;letter-spacing:0.142px;left:1301.80px;">You are an agent. Your internal name is "root_agent". The description about</div>
<div class="t" id="t65" style="top:472.42px;font-family:'Liberation Sans', sans-serif;font-size:23.5px;color:#0c0c14;font-weight:400;letter-spacing:0.246px;left:1301.80px;">you is "Tells the current time in a specified city.".</div>
<div class="t" id="t66" style="top:564.32px;font-family:'Liberation Sans', sans-serif;font-size:23.5px;color:#0c0c14;font-weight:400;letter-spacing:-0.475px;left:1149.60px;">User</div>
<div class="t" id="t67" style="top:564.32px;font-family:'Liberation Sans', sans-serif;font-size:23.5px;color:#0c0c14;font-weight:400;letter-spacing:0.034px;left:1302.90px;">What time is it in Athens?</div>
<div class="t" id="t68" style="top:656.42px;font-family:'Liberation Sans', sans-serif;font-size:23.5px;color:#0c0c14;font-weight:400;letter-spacing:-0.475px;left:1149.60px;">User</div>
<div class="t" id="t69" style="top:656.42px;font-family:'Liberation Sans', sans-serif;font-size:23.5px;color:#0c0c14;font-weight:400;letter-spacing:0.662px;left:1302.90px;">{"content": "", "role": "model"}</div>
<div class="t" id="t70" style="top:748.72px;font-family:'Liberation Sans', sans-serif;font-size:23.5px;color:#0c0c14;font-weight:400;letter-spacing:0.025px;left:1149.60px;">Tool</div>
<div class="t" id="t71" style="top:748.72px;font-family:'Liberation Sans', sans-serif;font-size:23.5px;color:#0c0c14;font-weight:400;letter-spacing:0.492px;left:1302.90px;">{"status": "success", "city": "Athens", "time": "10:30 AM"}</div>
<div class="t" id="t72" style="top:840.72px;font-family:'Liberation Sans', sans-serif;font-size:23.5px;color:#0c0c14;font-weight:400;letter-spacing:-0.475px;left:1149.60px;">User</div>
<div class="t" id="t73" style="top:840.72px;font-family:'Liberation Sans', sans-serif;font-size:23.5px;color:#0c0c14;font-weight:400;letter-spacing:0.351px;left:1302.90px;">{"content": "The current time in Athens is 10:30 AM.", "role": "model"}</div>
<div class="t" id="t74" style="top:932.62px;font-family:'Liberation Sans', sans-serif;font-size:23.5px;color:#0c0c14;font-weight:400;letter-spacing:-0.475px;left:1149.60px;">User</div>
<div class="t" id="t75" style="top:932.62px;font-family:'Liberation Sans', sans-serif;font-size:23.5px;color:#0c0c14;font-weight:400;letter-spacing:-0.193px;left:1302.90px;">exit</div>
<div class="t" id="t76" style="top:1023.61px;font-family:'Liberation Sans', sans-serif;font-size:25.4px;color:#2b2a3c;font-weight:400;letter-spacing:0.060px;-webkit-text-stroke:1.07px #2b2a3c;left:1143.00px;">JSON</div>
<div class="t" id="t77" style="top:1023.61px;font-family:'Liberation Sans', sans-serif;font-size:25.4px;color:#2b2a3c;font-weight:400;letter-spacing:2.430px;-webkit-text-stroke:1.07px #2b2a3c;right:784.57px;">Tools</div>
<div class="t" id="t78" style="top:1101.52px;font-family:'Liberation Mono', monospace;font-size:20.33px;color:#3f3e55;font-weight:400;letter-spacing:0.270px;left:1155.40px;"><span style="color:#3f3e55">[</span></div>
<div class="t" id="t79" style="top:1136.12px;font-family:'Liberation Mono', monospace;font-size:20.33px;color:#3f3e55;font-weight:400;letter-spacing:0.270px;left:1180.00px;"><span style="color:#3f3e55">{</span></div>
<div class="t" id="t80" style="top:1171.12px;font-family:'Liberation Mono', monospace;font-size:20.33px;color:#3f3e55;font-weight:400;letter-spacing:0.270px;left:1204.60px;"><span style="color:#5d9632">"description"</span><span style="color:#3f3e55">: </span><span style="color:#2f66ad">"Returns the current time in a specified city."</span><span style="color:#3f3e55">,</span></div>
<div class="t" id="t81" style="top:1206.72px;font-family:'Liberation Mono', monospace;font-size:20.33px;color:#3f3e55;font-weight:400;letter-spacing:0.270px;left:1204.60px;"><span style="color:#5d9632">"name"</span><span style="color:#3f3e55">: </span><span style="color:#2f66ad">"get_current_time"</span><span style="color:#3f3e55">,</span></div>
<div class="t" id="t82" style="top:1242.32px;font-family:'Liberation Mono', monospace;font-size:20.33px;color:#3f3e55;font-weight:400;letter-spacing:0.270px;left:1204.60px;"><span style="color:#5d9632">"parameters"</span><span style="color:#3f3e55">: </span><span style="color:#3f3e55">{</span></div>
<div class="t" id="t83" style="top:1277.72px;font-family:'Liberation Mono', monospace;font-size:20.33px;color:#3f3e55;font-weight:400;letter-spacing:0.270px;left:1229.00px;"><span style="color:#5d9632">"properties"</span><span style="color:#3f3e55">: </span><span style="color:#3f3e55">{</span></div>
<div class="t" id="t84" style="top:264.49px;font-family:'Liberation Sans', sans-serif;font-size:22.6px;color:#0c0c14;font-weight:400;letter-spacing:0.748px;left:2267.00px;">Metrics</div>
<div class="t" id="t85" style="top:264.49px;font-family:'Liberation Sans', sans-serif;font-size:22.6px;color:#4e4d66;font-weight:400;letter-spacing:-0.189px;left:2436.90px;">Params</div>
<div class="t" id="t86" style="top:264.49px;font-family:'Liberation Sans', sans-serif;font-size:22.6px;color:#4e4d66;font-weight:400;letter-spacing:0.526px;left:2583.40px;">Annotations</div>
<div class="t" id="t87" style="top:264.49px;font-family:'Liberation Sans', sans-serif;font-size:22.6px;color:#4e4d66;font-weight:400;letter-spacing:0.475px;left:2774.50px;">Insights</div>
<div class="t" id="t88" style="top:352.16px;font-family:'Liberation Sans', sans-serif;font-size:26.4px;color:#2b2a3c;font-weight:400;letter-spacing:0.819px;-webkit-text-stroke:1.11px #2b2a3c;left:2235.20px;">System Metrics</div>
<div class="t" id="t89" style="top:426.22px;font-family:'Liberation Sans', sans-serif;font-size:23.5px;color:#0c0c14;font-weight:400;letter-spacing:-0.019px;left:2234.80px;">Latency</div>
<div class="t" id="t90" style="top:426.13px;font-family:'Liberation Sans', sans-serif;font-size:22.9px;color:#6b6889;font-weight:400;letter-spacing:-0.435px;-webkit-text-stroke:0.96px #6b6889;right:45.44px;">1.41 sec</div>
<div class="t" id="t91" style="top:489.72px;font-family:'Liberation Sans', sans-serif;font-size:23.5px;color:#0c0c14;font-weight:400;letter-spacing:0.094px;left:2234.80px;">Num Input Tokens</div>
<div class="t" id="t92" style="top:489.63px;font-family:'Liberation Sans', sans-serif;font-size:22.9px;color:#6b6889;font-weight:400;-webkit-text-stroke:0.96px #6b6889;right:45.00px;">185</div>
<div class="t" id="t93" style="top:555.23px;font-family:'Liberation Sans', sans-serif;font-size:23.5px;color:#0c0c14;font-weight:400;letter-spacing:0.115px;left:2234.80px;">Num Output Tokens</div>
<div class="t" id="t94" style="top:555.13px;font-family:'Liberation Sans', sans-serif;font-size:22.9px;color:#6b6889;font-weight:400;-webkit-text-stroke:0.96px #6b6889;right:45.00px;">12</div>
<div class="t" id="t95" style="top:619.32px;font-family:'Liberation Sans', sans-serif;font-size:23.5px;color:#0c0c14;font-weight:400;letter-spacing:0.151px;left:2234.80px;">Num Total Tokens</div>
<div class="t" id="t96" style="top:619.23px;font-family:'Liberation Sans', sans-serif;font-size:22.9px;color:#6b6889;font-weight:400;-webkit-text-stroke:0.96px #6b6889;right:45.00px;">267</div>
<div class="t" id="t97" style="top:707.82px;font-family:'Liberation Sans', sans-serif;font-size:23.5px;color:#6e6d8b;font-weight:400;letter-spacing:0.186px;left:2233.70px;">You don't have any metrics enabled.</div>
<div class="t" id="t98" style="top:775.23px;font-family:'Liberation Sans', sans-serif;font-size:23.5px;color:#0c0c14;font-weight:400;letter-spacing:0.478px;-webkit-text-stroke:0.3px #0c0c14;left:2674.80px;">Configure Metrics</div>
</body></html>
